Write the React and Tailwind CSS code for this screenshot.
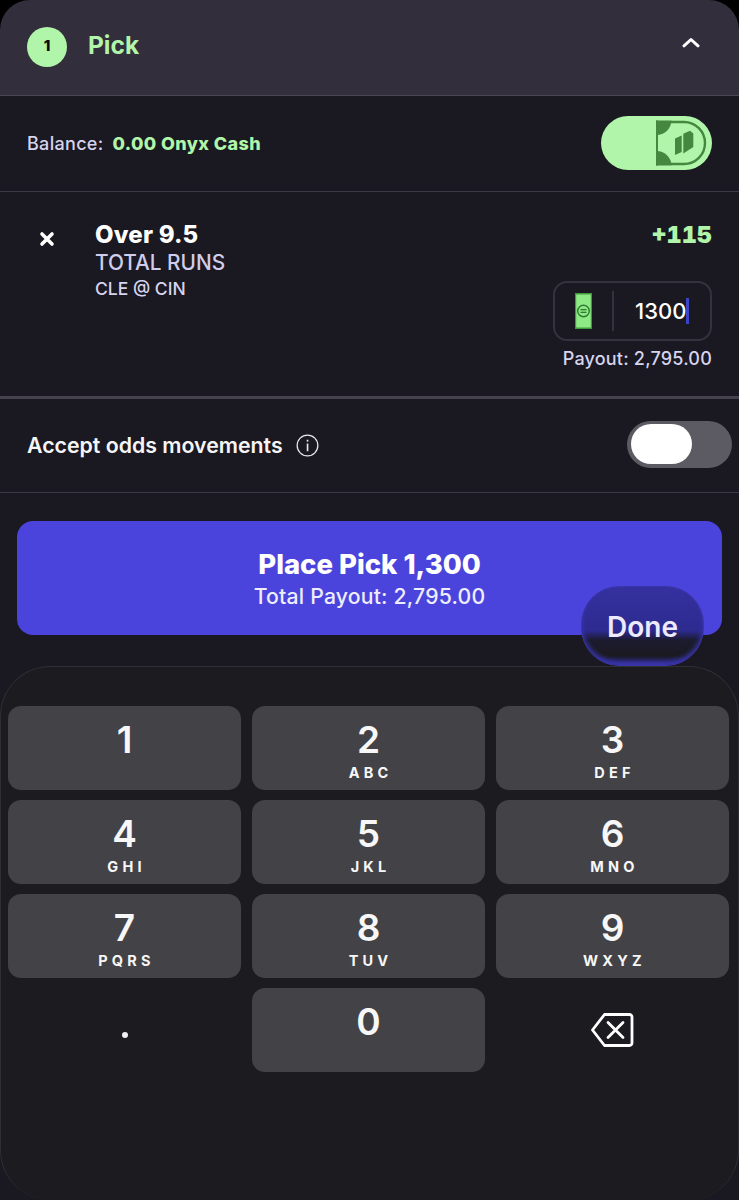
const KEYS = [
  ["1", ""], ["2", "ABC"], ["3", "DEF"],
  ["4", "GHI"], ["5", "JKL"], ["6", "MNO"],
  ["7", "PQRS"], ["8", "TUV"], ["9", "WXYZ"],
];

function Key({ n, sub }) {
  return (
    <div className="h-[84px] rounded-[13px] bg-[#434347] flex flex-col items-center text-[#f7f7f8]">
      <div className="mt-[13px] h-[41px] text-[37px] leading-[41px] font-semibold">{n}</div>
      <div className="mt-[5px] h-[16px] text-[14.500px] leading-[16px] font-bold tracking-[4.200px] pl-[4px]">{sub}</div>
    </div>
  );
}

function BigBill() {
  return (
    <svg width="56" height="54" viewBox="0 0 56 54" className="absolute right-0 top-0">
      <rect x="0" y="4.500" width="2" height="45" fill="#46873f" />
      <path d="M0 4.500H15.500A15 15 0 0 1 0 19Z" fill="#46873f" />
      <path d="M0 49.500H15.500A15 15 0 0 0 0 35Z" fill="#46873f" />
      <path d="M15 6H28A21 21 0 0 1 28 48H15" fill="none" stroke="#46873f" strokeWidth="2.400" />
      <path d="M19 22.500L25.700 19.500V36L19 39Z" fill="#46873f" />
      <path d="M27.300 17.800L34 14.800L37.300 17.500V31L27.300 37.500Z" fill="#46873f" />
    </svg>
  );
}

function SmallBill() {
  return (
    <svg width="17" height="36" viewBox="0 0 17 36">
      <rect width="17" height="36" fill="#3f9a3a" />
      <rect x="1.200" y="1.500" width="14.600" height="33" fill="#8dea84" />
      <circle cx="8.500" cy="18" r="5.800" fill="none" stroke="#2f7a33" strokeWidth="1.400" />
      <rect x="5.500" y="16" width="6" height="1.300" fill="#2f7a33" />
      <rect x="5.500" y="18.700" width="6" height="1.300" fill="#2f7a33" />
    </svg>
  );
}

export default function App() {
  return (
    <div className="relative w-[739px] h-[1200px] bg-[#1a1820] overflow-hidden font-['Inter',sans-serif]">
      <div className="bg-black">
        <div className="h-[96px] bg-[#332e3b] border-b border-[#4a4652] rounded-t-[30px] flex items-center pl-[27px] pr-[39px]">
          <div className="w-[40px] h-[40px] rounded-full bg-[#b0f5a9] flex items-center justify-center text-[15px] font-extrabold text-[#0d0d0d] mb-[2px]">1</div>
          <div className="ml-[21px] text-[24.500px] font-bold text-[#b0f5a9] mb-[4px]">Pick</div>
          <svg width="18" height="11" viewBox="0 0 18 11" className="ml-auto mb-[10px]">
            <path d="M2 8.800L9 2.500L16 8.800" fill="none" stroke="#ffffff" strokeWidth="3" strokeLinecap="round" strokeLinejoin="round" />
          </svg>
        </div>
      </div>

      <div className="h-[96px] border-b border-[#3c3944] flex items-center justify-between pl-[27px] pr-[27px]">
        <div className="flex items-center text-[18px]">
          <span className="font-medium text-[#d6d4ee] tracking-[0.300px]">Balance:</span>
          <span className="ml-[9px] font-extrabold text-[#b0f5a9] tracking-[0.400px]">0.00 Onyx Cash</span>
        </div>
        <div className="relative w-[111px] h-[54px] rounded-full bg-[#b0f5a9] overflow-hidden mb-[2px]">
          <BigBill />
        </div>
      </div>

      <div className="relative h-[207px] border-b-[3px] border-[#45424e] pl-[39px] pr-[27px] flex">
        <svg width="16" height="16" viewBox="0 0 16 16" className="mt-[39px]">
          <path d="M3 3L13 13M13 3L3 13" stroke="#ffffff" strokeWidth="3.600" strokeLinecap="round" />
        </svg>
        <div className="ml-[40px] pt-[28px]">
          <div className="text-[24px] leading-[30px] font-extrabold text-white tracking-[0.200px]">Over 9.5</div>
          <div className="text-[20.800px] leading-[26px] font-medium text-[#cfcdea]">TOTAL RUNS</div>
          <div className="mt-[1px] text-[17.500px] leading-[23px] font-medium text-[#d6d4ee]">CLE @ CIN</div>
        </div>
        <div className="ml-auto pt-[28px] flex flex-col items-end">
          <div className="text-[23.500px] leading-[30px] font-black text-[#b0f5a9] tabular-nums">+115</div>
          <div className="mt-[31px] w-[159px] h-[60px] rounded-[14px] border-2 border-[#35323d] flex items-center">
            <div className="w-[57px] flex justify-center"><SmallBill /></div>
            <div className="w-[2px] h-[40px] bg-[#35323d]" />
            <div className="flex-1 flex items-center pl-[21px] text-[22px] font-medium text-white">
              1300<span className="w-[3px] h-[26px] bg-[#3a44c8]" />
            </div>
          </div>
          <div className="mt-[6px] text-[18px] leading-[24px] font-medium text-[#d6d4ee] tracking-[0.200px]">Payout: 2,795.00</div>
        </div>
      </div>

      <div className="h-[94px] border-b border-[#3c3944] flex items-center pl-[27px] pr-[7px]">
        <span className="text-[21.300px] font-semibold text-[#f5f5f7]">Accept odds movements</span>
        <svg width="23" height="23" viewBox="0 0 24 24" className="ml-[13px]">
          <circle cx="12" cy="12" r="10.800" fill="none" stroke="#e8e7f0" strokeWidth="1.300" />
          <rect x="11.200" y="10" width="1.700" height="8" fill="#e8e7f0" />
          <rect x="11.200" y="6" width="1.700" height="2" fill="#e8e7f0" />
        </svg>
        <div className="ml-auto w-[105px] h-[47px] rounded-full bg-[#5c5a63] pl-[4px] flex items-center mb-[3px]">
          <div className="w-[61px] h-[40px] rounded-full bg-white" />
        </div>
      </div>

      <div className="mt-[28px] mx-[17px] h-[114px] rounded-[16px] bg-[#4b44dc] flex flex-col items-center pt-[25px] text-white">
        <div className="text-[27.500px] leading-[36px] font-extrabold">Place Pick 1,300</div>
        <div className="mt-[1px] text-[21.200px] leading-[26px] font-medium text-[#eeedfc] tracking-[0.200px]">Total Payout: 2,795.00</div>
      </div>

      <div className="mt-[31px] h-[534px] rounded-[50px] border border-[#302e35] border-b-0 bg-[#1c1c20] pl-[7px] pr-[9px] pt-[39px]">
        <div className="grid grid-cols-3 gap-x-[11px] gap-y-[10px]">
          {KEYS.map(([n, s]) => <Key key={n} n={n} sub={s} />)}
          <div className="h-[84px] flex items-center justify-center">
            <span className="w-[6px] h-[6px] rounded-full bg-[#f0f0f2] mt-[10px]" />
          </div>
          <Key n="0" sub="" />
          <div className="h-[84px] flex items-center justify-center">
            <svg width="44" height="36" viewBox="0 0 44 36" className="mr-[1px]">
              <path d="M14.500 2.500H39.500A2.500 2.500 0 0 1 42 5V31A2.500 2.500 0 0 1 39.500 33.500H14.500L2.500 18Z" fill="none" stroke="#ffffff" strokeWidth="2.800" strokeLinejoin="round" />
              <path d="M18 10.500L33 25.500M33 10.500L18 25.500" stroke="#ffffff" strokeWidth="2.800" strokeLinecap="round" />
            </svg>
          </div>
        </div>
      </div>

      <div className="absolute left-[581px] top-[586px] w-[123px] h-[80px] rounded-[38px] border border-[#3a36a8] shadow-[inset_0_-3px_5px_#3b36b5] bg-[linear-gradient(180deg,#35319f_0%,#2d2a90_56%,#1c1b2f_68%,#1b1a20_88%,#2a2880_100%)] flex items-center justify-center">
        <span className="text-[28px] font-semibold text-[#eceafc] mt-[1px]">Done</span>
      </div>
    </div>
  );
}
